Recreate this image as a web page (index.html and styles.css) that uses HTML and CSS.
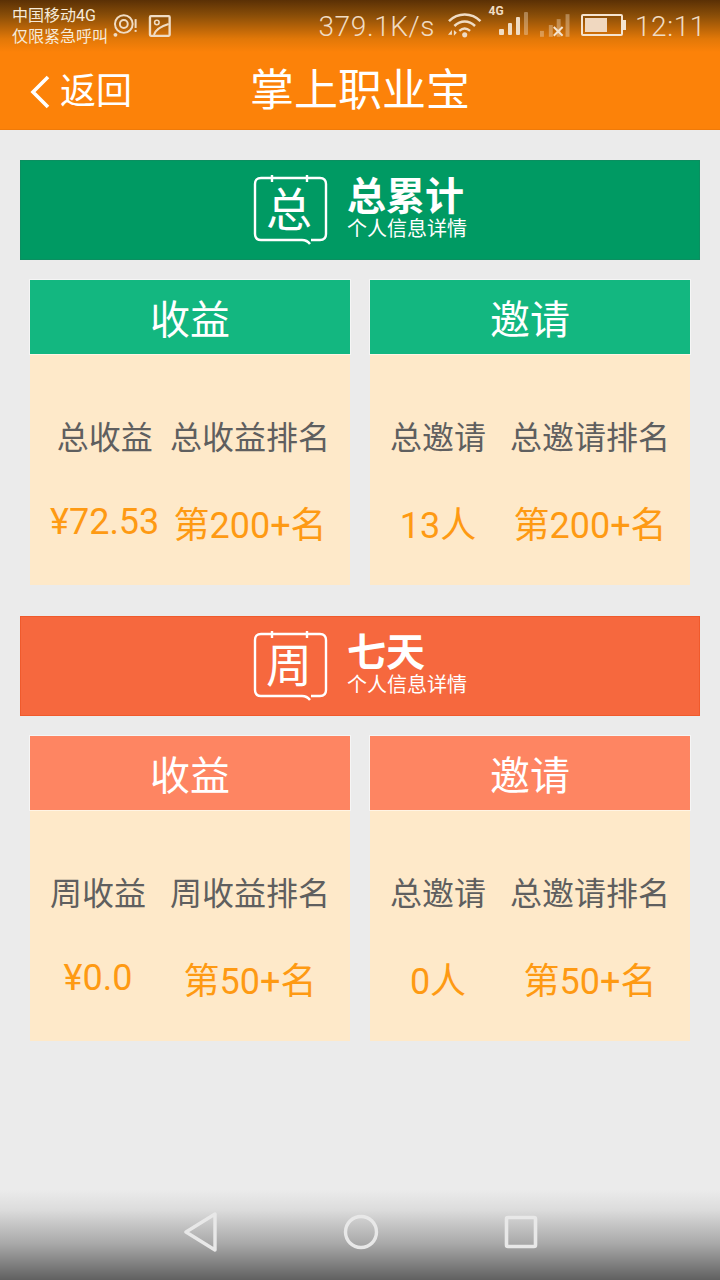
FILE: index.html
```html
<!DOCTYPE html>
<html lang="zh-CN">
<head>
  <meta charset="UTF-8" />
  <meta name="viewport" content="width=device-width, initial-scale=1.0"/>
  <title>掌上职业宝</title>
  <link rel="stylesheet" href="styles.css">
</head>
<body>
  <header class="top">
    <div class="status">
      <div class="carrier">
        <span>中国移动4G</span>
        <span>仅限紧急呼叫</span>
      </div>
      <svg class="ic-hotspot" width="26" height="26" viewBox="0 0 26 26">
        <circle cx="11" cy="11" r="9" fill="none" stroke="#f0dcc4" stroke-width="2"/>
        <circle cx="11" cy="11" r="4" fill="none" stroke="#f0dcc4" stroke-width="2"/>
        <circle cx="2.500" cy="22" r="2" fill="#f0dcc4"/>
        <rect x="22" y="6" width="2" height="9" fill="#f0dcc4"/>
        <rect x="22" y="17" width="2" height="2" fill="#f0dcc4"/>
      </svg>
      <svg class="ic-photo" width="24" height="24" viewBox="0 0 24 24">
        <rect x="2" y="2" width="20" height="20" rx="1" fill="none" stroke="#f0dcc4" stroke-width="2.400"/>
        <circle cx="9" cy="8.500" r="2.300" fill="none" stroke="#f0dcc4" stroke-width="1.600"/>
        <path d="M6 21 C8 15 14 12 21 10" fill="none" stroke="#f0dcc4" stroke-width="2"/>
      </svg>
      <span class="speed">379.1K/s</span>
      <svg class="ic-wifi" width="36" height="26" viewBox="0 0 36 26">
        <path d="M2 9 C11 0 25 0 34 9" fill="none" stroke="#f0dcc4" stroke-width="2.600"/>
        <path d="M7.500 14 C14 8 22 8 28.500 14" fill="none" stroke="#f0dcc4" stroke-width="2.600"/>
        <path d="M12.500 19 C16 16 20 16 23.500 19" fill="none" stroke="#f0dcc4" stroke-width="2.400"/>
        <circle cx="18" cy="23" r="2.600" fill="#f0dcc4"/>
        <path d="M1 23 L5 18 V23 Z M7 18 L10 21 L7 24 Z" fill="#f0dcc4"/>
      </svg>
      <div class="signal">
        <span class="signal-tag">4G</span>
        <svg width="30" height="28" viewBox="0 0 30 28">
          <rect x="1" y="21" width="5" height="6" rx="1" fill="#f0dcc4"/>
          <rect x="10" y="15" width="4" height="12" rx="1" fill="#f0dcc4"/>
          <rect x="18" y="9" width="4" height="18" rx="1" fill="#f0dcc4"/>
          <rect x="26" y="4" width="4" height="23" rx="1" fill="#f0dcc4" opacity=".4"/>
        </svg>
      </div>
      <svg class="ic-nosim" width="32" height="28" viewBox="0 0 32 28">
        <rect x="1" y="21" width="4" height="6" fill="#f0dcc4" opacity=".4"/>
        <rect x="10" y="15" width="4" height="12" fill="#f0dcc4" opacity=".4"/>
        <rect x="18" y="9" width="4" height="18" fill="#f0dcc4" opacity=".4"/>
        <rect x="27" y="4" width="4" height="23" fill="#f0dcc4" opacity=".4"/>
        <path d="M15 17 L24 26 M24 17 L15 26" stroke="#f4e4d0" stroke-width="2"/>
      </svg>
      <div class="battery"><div class="battery-level"></div></div>
      <span class="clock">12:11</span>
    </div>
    <div class="titlebar">
      <a class="back">
        <svg width="20" height="34" viewBox="0 0 20 34">
          <path d="M18 2 L3 17 L18 32" fill="none" stroke="#fff" stroke-width="3.600"/>
        </svg>
        <span>返回</span>
      </a>
      <h1>掌上职业宝</h1>
    </div>
  </header>

  <main class="content">
    <section class="group group-total">
      <div class="banner">
        <svg class="banner-icon" width="76" height="70" viewBox="0 0 76 70">
          <path d="M58 65 H67 Q73 65 73 59 V9 Q73 3 67 3 H8 Q2 3 2 9 V59 Q2 65 8 65 H49 Q54 65 57 69 M19 0 V7 M54 0 V7" fill="none" stroke="#fff" stroke-width="2.400"/>
          <text x="36" y="51" class="banner-char">总</text>
        </svg>
        <div class="banner-text">
          <strong>总累计</strong>
          <span>个人信息详情</span>
        </div>
      </div>
      <div class="cards">
        <div class="card">
          <h2>收益</h2>
          <div class="stats">
            <span class="label">总收益</span>
            <span class="label">总收益排名</span>
            <span class="value">¥72.53</span>
            <span class="value">第200+名</span>
          </div>
        </div>
        <div class="card">
          <h2>邀请</h2>
          <div class="stats">
            <span class="label">总邀请</span>
            <span class="label">总邀请排名</span>
            <span class="value">13人</span>
            <span class="value">第200+名</span>
          </div>
        </div>
      </div>
    </section>

    <section class="group group-week">
      <div class="banner">
        <svg class="banner-icon" width="76" height="70" viewBox="0 0 76 70">
          <path d="M58 65 H67 Q73 65 73 59 V9 Q73 3 67 3 H8 Q2 3 2 9 V59 Q2 65 8 65 H49 Q54 65 57 69 M19 0 V7 M54 0 V7" fill="none" stroke="#fff" stroke-width="2.400"/>
          <text x="36" y="51" class="banner-char">周</text>
        </svg>
        <div class="banner-text">
          <strong>七天</strong>
          <span>个人信息详情</span>
        </div>
      </div>
      <div class="cards">
        <div class="card">
          <h2>收益</h2>
          <div class="stats">
            <span class="label">周收益</span>
            <span class="label">周收益排名</span>
            <span class="value">¥0.0</span>
            <span class="value">第50+名</span>
          </div>
        </div>
        <div class="card">
          <h2>邀请</h2>
          <div class="stats">
            <span class="label">总邀请</span>
            <span class="label">总邀请排名</span>
            <span class="value">0人</span>
            <span class="value">第50+名</span>
          </div>
        </div>
      </div>
    </section>
  </main>

  <nav class="navbar">
    <svg width="34" height="40" viewBox="0 0 34 40">
      <path d="M2 20 L31 2 V38 Z" fill="none" stroke="#e8e8e8" stroke-width="3.400" stroke-linejoin="round"/>
    </svg>
    <svg width="36" height="36" viewBox="0 0 36 36">
      <circle cx="18" cy="18" r="15.500" fill="none" stroke="#e8e8e8" stroke-width="3.400"/>
    </svg>
    <svg width="34" height="34" viewBox="0 0 34 34">
      <rect x="2.500" y="2.500" width="29" height="29" rx="1.500" fill="none" stroke="#e8e8e8" stroke-width="3.600"/>
    </svg>
  </nav>
</body>
</html>
```

FILE: styles.css
```css
* {
  box-sizing: border-box;
}
html, body {
  margin: 0;
  height: 1280px;
}
body {
  display: flex;
  flex-direction: column;
  width: 720px;
  background: #ebebeb;
  font-family: Roboto, "Noto Sans CJK SC", sans-serif;
  overflow: hidden;
}

/* top bar */
.top {
  height: 130px;
  background: #fc8209;
  border-bottom: 1px solid #f07a08;
}
.status {
  display: flex;
  align-items: center;
  height: 52px;
  padding: 0 14px 0 12px;
  background: linear-gradient(#5a3005, #8a4e08 30%, #e27808 75%, #fc8209);
  color: #f0dcc4;
}
.carrier {
  display: flex;
  flex-direction: column;
  width: 102px;
  font-size: 16px;
  line-height: 21px;
  color: #f6ead9;
  white-space: nowrap;
}
.ic-hotspot {
  margin: 0 0 0 1px;
}
.ic-photo {
  margin-left: 9px;
}
.speed {
  margin-left: 147px;
  font-size: 28px;
  font-weight: 300;
  letter-spacing: .6px;
  white-space: nowrap;
}
.ic-wifi {
  margin-left: 12px;
  margin-top: -2px;
}
.signal {
  position: relative;
  margin-left: 15px;
  margin-top: -4px;
}
.signal-tag {
  position: absolute;
  top: -4px;
  left: -9px;
  font-size: 12px;
  font-weight: 700;
}
.ic-nosim {
  margin-left: 11px;
  margin-top: -4px;
}
.battery {
  position: relative;
  flex: none;
  width: 42px;
  height: 22px;
  margin-left: 11px;
  margin-top: -3px;
  padding: 2px;
  border: 2px solid #f5e4d0;
  border-radius: 2px;
}
.battery::after {
  content: "";
  position: absolute;
  right: -5px;
  top: 4px;
  width: 3px;
  height: 10px;
  background: #f5e4d0;
}
.battery-level {
  width: 22px;
  height: 100%;
  background: #f0d8c0;
}
.clock {
  margin-left: 12px;
  font-size: 28px;
  font-weight: 300;
  letter-spacing: .6px;
}
.titlebar {
  position: relative;
  display: flex;
  align-items: center;
  justify-content: center;
  height: 77px;
  color: #fff;
}
.titlebar h1 {
  margin: 0;
  font-size: 44px;
  font-weight: 400;
  line-height: 70px;
}
.back {
  position: absolute;
  left: 30px;
  top: 5px;
  display: flex;
  align-items: center;
  gap: 10px;
  font-size: 36px;
  line-height: 70px;
}

/* content */
.content {
  flex: 1;
  padding: 30px 20px 0;
}
.group {
  margin-bottom: 31px;
}
.banner {
  display: flex;
  align-items: center;
  justify-content: center;
  gap: 18px;
  height: 100px;
  color: #fff;
}
.banner-icon {
  flex: none;
}
.banner-char {
  font-size: 46px;
  font-weight: 400;
  text-anchor: middle;
  fill: #fff;
}
.banner-text {
  display: flex;
  flex-direction: column;
  width: 120px;
}
.banner-text strong {
  font-size: 39px;
  font-weight: 700;
  line-height: 38px;
  white-space: nowrap;
}
.banner-text span {
  font-size: 20px;
  line-height: 26px;
  white-space: nowrap;
}
.cards {
  display: grid;
  grid-template-columns: 320px 320px;
  justify-content: space-between;
  padding: 20px 10px 0;
}
.card {
  height: 305px;
  background: #fee9c9;
}
.card h2 {
  margin: 0;
  height: 74px;
  font-size: 40px;
  font-weight: 400;
  line-height: 82px;
  text-align: center;
  color: #fff;
  box-shadow: 0 0 0 1px rgba(255, 255, 255, .5);
}
.stats {
  display: grid;
  grid-template-columns: auto 160px;
  justify-content: space-between;
  align-items: center;
  grid-auto-rows: 87px;
  padding: 37px 20px 0;
  text-align: center;
  white-space: nowrap;
}
.label {
  font-size: 32px;
  color: #5f5f5f;
}
.value {
  font-size: 36px;
  color: #fe9a13;
}
.group-total .banner {
  background: #009a63;
  border: 1px solid #0b8f60;
}
.group-total .card h2 {
  background: #13b780;
}
.group-week .banner {
  background: #f6683e;
  border: 1px solid #f05a2c;
}
.group-week .card h2 {
  background: #fe8562;
}

/* android nav */
.navbar {
  display: flex;
  align-items: center;
  justify-content: center;
  gap: 125px;
  height: 90px;
  padding: 0 0 6px 2px;
  background: linear-gradient(#ebebeb, #dcdcdc 22%, #a8a8a8 60%, #606060);
}
```
